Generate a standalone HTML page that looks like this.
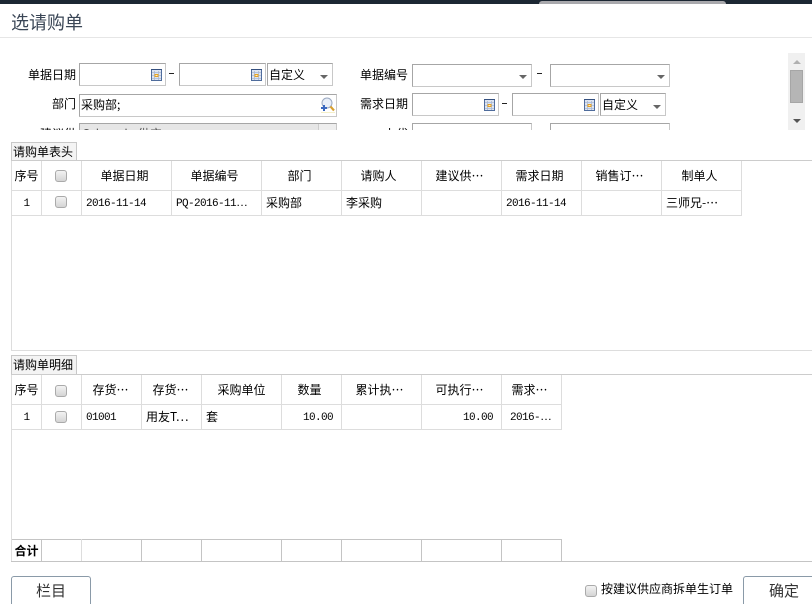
<!DOCTYPE html>
<html><head><meta charset="utf-8">
<style>
html,body{margin:0;padding:0;background:#fff}
#p{position:relative;width:812px;height:604px;overflow:hidden;background:#fff;font:12px/14px "WenQuanYi Zen Hei","Noto Sans CJK SC",sans-serif;color:#000}
#p div{position:absolute;box-sizing:border-box}
.t{white-space:nowrap;height:14px}
.c{text-align:center}
.r{text-align:right}
.m{font-family:"Liberation Mono","WenQuanYi Zen Hei",monospace;font-size:11px;letter-spacing:-.6px}
.e{font:12px/1px "WenQuanYi Zen Hei",sans-serif;letter-spacing:0}
.i{border:1px solid;border-color:#a6a6a6 #c8c8c8 #c8c8c8 #a6a6a6;background:#fff;height:23px}
.h{background:#ddd}
.v{background:#ddd;width:1px}
.g{background:#c4c4c4}
.cb{width:12px;height:12px;border:1px solid #aaa;border-radius:3px;background:linear-gradient(#f2f2f2,#d4d4d4)}
.ar{width:0;height:0;border-left:4px solid transparent;border-right:4px solid transparent;border-top:4px solid #666}
.d{width:5px;height:1px;background:#222}
.tab{border:1px solid #c8c8c8;border-bottom:0;background:#f4f4f4;height:19px;width:66px;line-height:17px;padding-left:1px;white-space:nowrap}
.btn{border:1px solid #8a9aa8;border-bottom:0;border-radius:3px 3px 0 0;background:#fff;font-size:15px;color:#333;text-align:center;line-height:28px;height:29px}
svg{position:absolute}
</style></head><body><div id="p">
<svg width="0" height="0" style="left:0;top:0"><defs><g id="cal"><rect x=".5" y=".5" width="10" height="11" fill="#dde4f2" stroke="#4f6c9c"/><path d="M0 .5h11" stroke="#35507f"/><path d="M1 3.500h9M1 6.500h9M1 9.500h9M3.500 2v9M7.500 2v9" stroke="#a9b8d2" stroke-width=".8"/><rect x="4" y="5.500" width="3" height="2" fill="#fff2c8" stroke="#e69a10" stroke-width=".9"/></g></defs></svg>
<div style="left:0;top:0;width:812px;height:4px;background:#1c2733"></div>
<div style="left:539px;top:1px;width:187px;height:3px;background:#a9a9ad;border-radius:3px 3px 0 0"></div>
<div class="t" style="left:11px;top:12px;font-size:18px;line-height:20px;height:20px;color:#3a4656">选请购单</div>
<div style="left:0;top:37px;width:812px;height:1px;background:#e6e6e6"></div>

<!-- form -->
<div style="left:0;top:38px;width:812px;height:92px;overflow:hidden">
<div class="t r" style="left:16px;top:30px;width:60px">单据日期</div>
<div class="i" style="left:79px;top:25px;width:87px"></div>
<svg style="left:151px;top:31px" width="11" height="12"><use href="#cal"/></svg>
<div class="d" style="left:169px;top:35px"></div>
<div class="i" style="left:179px;top:25px;width:87px"></div>
<svg style="left:251px;top:31px" width="11" height="12"><use href="#cal"/></svg>
<div class="i" style="left:267px;top:25px;width:66px"></div>
<div class="t" style="left:269px;top:30px">自定义</div>
<div class="ar" style="left:320px;top:37px"></div>

<div class="t r" style="left:348px;top:30px;width:60px">单据编号</div>
<div class="i" style="left:412px;top:26px;width:120px"></div>
<div class="ar" style="left:519px;top:37px"></div>
<div class="d" style="left:537px;top:35px"></div>
<div class="i" style="left:550px;top:26px;width:120px"></div>
<div class="ar" style="left:657px;top:37px"></div>

<div class="t r" style="left:16px;top:59px;width:60px">部门</div>
<div class="i" style="left:79px;top:56px;width:258px"></div>
<div class="t" style="left:81px;top:60px">采购部;</div>
<svg style="left:320px;top:59px" width="15" height="16"><circle cx="7" cy="6" r="5" fill="#e8eef8" stroke="#9aa8c0"/><path d="M10.500 9.500l3.500 4" stroke="#d8a030" stroke-width="2.200"/><path d="M4 8v6M1 11h6" stroke="#3a68c0" stroke-width="2"/><path d="M1 15.500h14" stroke="#f4efc8"/></svg>

<div class="t r" style="left:348px;top:59px;width:60px">需求日期</div>
<div class="i" style="left:412px;top:55px;width:87px"></div>
<svg style="left:484px;top:61px" width="11" height="12"><use href="#cal"/></svg>
<div class="d" style="left:502px;top:65px"></div>
<div class="i" style="left:512px;top:55px;width:87px"></div>
<svg style="left:584px;top:61px" width="11" height="12"><use href="#cal"/></svg>
<div class="i" style="left:600px;top:55px;width:66px"></div>
<div class="t" style="left:602px;top:60px">自定义</div>
<div class="ar" style="left:653px;top:67px"></div>

<div class="t r" style="left:16px;top:89px;width:60px">建议供</div>
<div class="i" style="left:79px;top:85px;width:258px;background:#e6e6e6"></div>
<div class="t" style="left:82px;top:89px;color:#555">Cyberwin 供应</div>
<div style="left:318px;top:86px;width:18px;height:8px;background:#eee;border-left:1px solid #ccc"></div>
<div class="t r" style="left:348px;top:89px;width:60px">上代</div>
<div class="i" style="left:412px;top:85px;width:120px"></div>
<div class="i" style="left:550px;top:85px;width:120px"></div>
</div>

<!-- scrollbar -->
<div style="left:788px;top:53px;width:17px;height:77px;background:#f0f0f0"></div>
<div style="left:790px;top:70px;width:13px;height:33px;background:#b5b5b5;border:1px solid #a6a6a6"></div>
<div style="left:793px;top:60px;width:0;height:0;border-left:4px solid transparent;border-right:4px solid transparent;border-bottom:4px solid #b0b0b0"></div>
<div style="left:793px;top:119px;width:0;height:0;border-left:4px solid transparent;border-right:4px solid transparent;border-top:4px solid #555"></div>

<!-- table 1 -->
<div class="tab" style="left:11px;top:142px">请购单表头</div>
<div style="left:11px;top:160px;width:801px;height:1px;background:#ccc"></div>
<div style="left:11px;top:161px;width:1px;height:189px;background:#ddd"></div>
<div style="left:11px;top:350px;width:801px;height:1px;background:#ddd"></div>
<div class="h" style="left:12px;top:190px;width:730px;height:1px"></div>
<div class="h" style="left:12px;top:215px;width:730px;height:1px"></div>
<div class="v" style="left:41px;top:161px;height:55px"></div>
<div class="v" style="left:81px;top:161px;height:55px"></div>
<div class="v" style="left:171px;top:161px;height:55px"></div>
<div class="v" style="left:261px;top:161px;height:55px"></div>
<div class="v" style="left:341px;top:161px;height:55px"></div>
<div class="v" style="left:421px;top:161px;height:55px"></div>
<div class="v" style="left:501px;top:161px;height:55px"></div>
<div class="v" style="left:581px;top:161px;height:55px"></div>
<div class="v" style="left:661px;top:161px;height:55px"></div>
<div class="v" style="left:741px;top:161px;height:55px"></div>
<div class="t c" style="left:12px;top:169px;width:29px">序号</div>
<div class="cb" style="left:55px;top:170px"></div>
<div class="t c" style="left:80px;top:169px;width:89px">单据日期</div>
<div class="t c" style="left:170px;top:169px;width:89px">单据编号</div>
<div class="t c" style="left:260px;top:169px;width:79px">部门</div>
<div class="t c" style="left:339px;top:169px;width:79px">请购人</div>
<div class="t c" style="left:420px;top:169px;width:79px">建议供…</div>
<div class="t c" style="left:500px;top:169px;width:79px">需求日期</div>
<div class="t c" style="left:580px;top:169px;width:79px">销售订…</div>
<div class="t c" style="left:660px;top:169px;width:79px">制单人</div>
<div class="t c m" style="left:12px;top:197px;width:29px">1</div>
<div class="cb" style="left:55px;top:196px"></div>
<div class="t m" style="left:86px;top:197px">2016-11-14</div>
<div class="t m" style="left:176px;top:197px">PQ-2016-11<span class="e">…</span></div>
<div class="t" style="left:266px;top:196px">采购部</div>
<div class="t" style="left:346px;top:196px">李采购</div>
<div class="t m" style="left:506px;top:197px">2016-11-14</div>
<div class="t" style="left:666px;top:196px">三师兄-…</div>

<!-- table 2 -->
<div class="tab" style="left:11px;top:355px">请购单明细</div>
<div style="left:11px;top:374px;width:801px;height:1px;background:#ccc"></div>
<div style="left:11px;top:375px;width:1px;height:186px;background:#ddd"></div>
<div class="h" style="left:12px;top:404px;width:550px;height:1px"></div>
<div class="h" style="left:12px;top:429px;width:550px;height:1px"></div>
<div class="v" style="left:41px;top:375px;height:55px"></div>
<div class="v" style="left:81px;top:375px;height:55px"></div>
<div class="v" style="left:141px;top:375px;height:55px"></div>
<div class="v" style="left:201px;top:375px;height:55px"></div>
<div class="v" style="left:281px;top:375px;height:55px"></div>
<div class="v" style="left:341px;top:375px;height:55px"></div>
<div class="v" style="left:421px;top:375px;height:55px"></div>
<div class="v" style="left:501px;top:375px;height:55px"></div>
<div class="v" style="left:561px;top:375px;height:55px"></div>
<div class="t c" style="left:12px;top:383px;width:29px">序号</div>
<div class="cb" style="left:55px;top:385px"></div>
<div class="t c" style="left:81px;top:383px;width:59px">存货…</div>
<div class="t c" style="left:141px;top:383px;width:59px">存货…</div>
<div class="t c" style="left:202px;top:383px;width:79px">采购单位</div>
<div class="t c" style="left:280px;top:383px;width:59px">数量</div>
<div class="t c" style="left:340px;top:383px;width:79px">累计执…</div>
<div class="t c" style="left:420px;top:383px;width:79px">可执行…</div>
<div class="t c" style="left:500px;top:383px;width:59px">需求…</div>
<div class="t c m" style="left:12px;top:411px;width:29px">1</div>
<div class="cb" style="left:55px;top:411px"></div>
<div class="t m" style="left:86px;top:411px">01001</div>
<div class="t" style="left:146px;top:410px">用友T…</div>
<div class="t" style="left:206px;top:410px">套</div>
<div class="t m r" style="left:282px;top:411px;width:51px">10.00</div>
<div class="t m r" style="left:422px;top:411px;width:71px">10.00</div>
<div class="t m" style="left:510px;top:411px">2016-<span class="e">…</span></div>

<!-- footer row -->
<div class="g" style="left:12px;top:539px;width:550px;height:1px"></div>
<div class="g" style="left:11px;top:561px;width:801px;height:1px"></div>
<div class="g" style="left:41px;top:539px;width:1px;height:22px"></div>
<div class="v" style="left:81px;top:539px;height:22px"></div>
<div class="g" style="left:141px;top:539px;width:1px;height:22px"></div>
<div class="g" style="left:201px;top:539px;width:1px;height:22px"></div>
<div class="g" style="left:281px;top:539px;width:1px;height:22px"></div>
<div class="g" style="left:341px;top:539px;width:1px;height:22px"></div>
<div class="g" style="left:421px;top:539px;width:1px;height:22px"></div>
<div class="g" style="left:501px;top:539px;width:1px;height:22px"></div>
<div class="g" style="left:561px;top:539px;width:1px;height:22px"></div>
<div class="t c" style="left:12px;top:544px;width:29px;font-weight:bold">合计</div>

<!-- bottom -->
<div class="btn" style="left:11px;top:576px;width:80px">栏目</div>
<div class="cb" style="left:585px;top:585px"></div>
<div class="t" style="left:601px;top:582px">按建议供应商拆单生订单</div>
<div class="btn" style="left:743px;top:576px;width:81px;border-right:0">确定</div>
</div></body></html>
